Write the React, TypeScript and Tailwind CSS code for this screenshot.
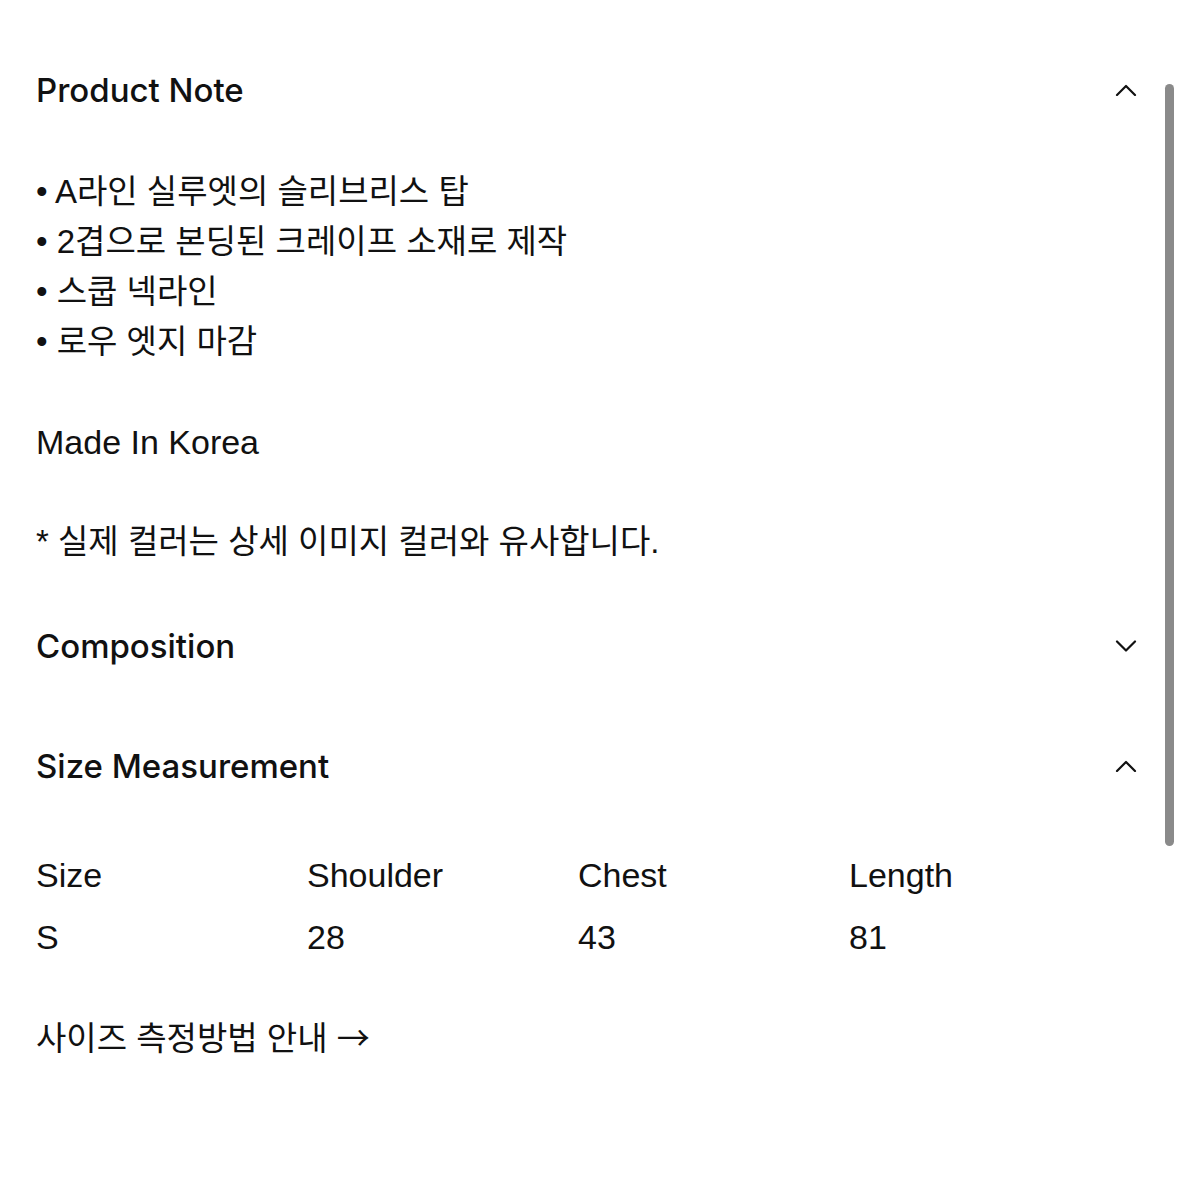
import React from "react";

const Chevron = ({ up }: { up: boolean }) => (
  <svg width="22" height="12" viewBox="0 0 22 12" fill="none" className="shrink-0">
    {up ? (
      <polyline points="2,11 11,2 20,11" stroke="#111" strokeWidth="2.2" strokeLinecap="round" strokeLinejoin="round" />
    ) : (
      <polyline points="2,1.5 11,10.5 20,1.5" stroke="#111" strokeWidth="2.2" strokeLinecap="round" strokeLinejoin="round" />
    )}
  </svg>
);

const body = { fontFamily: '"Liberation Sans", "Noto Sans CJK KR", sans-serif' };
const head = { fontFamily: 'Inter, "Liberation Sans", "Noto Sans CJK KR", sans-serif' };
const cjk = { fontFamily: '"Noto Sans CJK KR", sans-serif' };

export default function App() {
  return (
    <div className="relative w-[1183px] h-[1200px] bg-white text-[#111] overflow-hidden" style={body}>
      <div className="pl-[36px] pr-[46px] pt-[70px]">
        <div className="flex items-center justify-between h-[40px]">
          <h2 className="text-[33px] font-medium leading-[40px]" style={head}>Product Note</h2>
          <Chevron up />
        </div>
        <div className="mt-[57px] text-[33px] leading-[50px]">
          <p>• A라인 실루엣의 슬리브리스 탑</p>
          <p>• 2겹으로 본딩된 크레이프 소재로 제작</p>
          <p>• 스쿱 넥라인</p>
          <p>• 로우 엣지 마감</p>
          <p className="mt-[50px] text-[34px]">Made In Korea</p>
          <p className="mt-[50px]">* 실제 컬러는 상세 이미지 컬러와 유사합니다.</p>
        </div>
        <div className="mt-[59px] flex items-center justify-between h-[40px]">
          <h2 className="text-[33px] font-medium leading-[40px]" style={head}>Composition</h2>
          <Chevron up={false} />
        </div>
        <div className="mt-[80px] flex items-center justify-between h-[40px]">
          <h2 className="text-[33px] font-medium leading-[40px]" style={head}>Size Measurement</h2>
          <Chevron up />
        </div>
        <div className="mt-[58px] grid grid-cols-4 w-[1084px] text-[34px] leading-[62px]">
          <div>Size</div>
          <div>Shoulder</div>
          <div>Chest</div>
          <div>Length</div>
          <div>S</div>
          <div>28</div>
          <div>43</div>
          <div>81</div>
        </div>
        <p className="mt-[43px] text-[33px] leading-[50px]">
          사이즈 측정방법 안내 <span style={cjk}>→</span>
        </p>
      </div>
      <div className="absolute left-[1165px] top-[84px] w-[9px] h-[762px] rounded-full bg-[#8a8a8a]" />
    </div>
  );
}
